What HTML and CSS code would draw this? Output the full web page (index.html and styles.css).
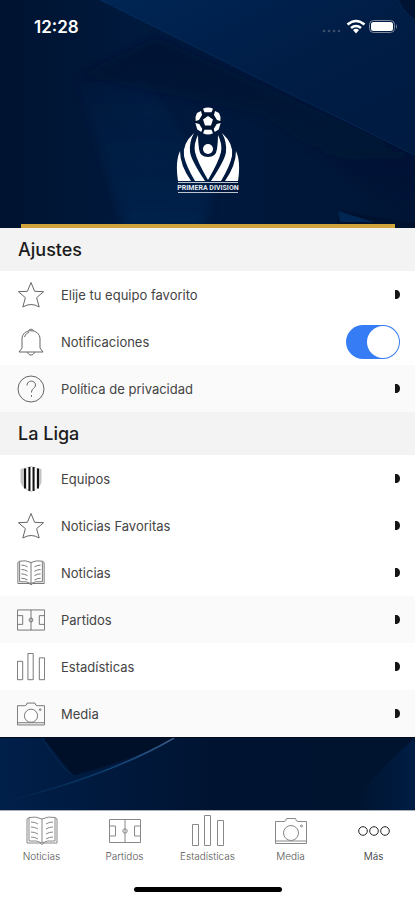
FILE: index.html
```html
<!DOCTYPE html>
<html lang="es">
<head>
<meta charset="utf-8">
<meta name="viewport" content="width=device-width, initial-scale=1">
<title>Ajustes</title>
<link rel="stylesheet" href="styles.css">
</head>
<body>
<svg class="sprite" aria-hidden="true">
  <symbol id="star" viewBox="0 0 28 28"><path d="M14 1.500l3.600 8.800 9 .4-7 6 2.600 9.300q-8-5-16.400 0l2.600-9.300-7-6 9-.4z"/></symbol>
  <symbol id="bell" viewBox="0 0 28 28"><path d="M11.500 3C12 .7 16 .7 16.500 3M5 20V11C5 0 23 0 23 11v9l3 4H2l3-4M7.500 9c1-3 2.500-4 4.500-4.500M10.500 24c1 4 6 4 7 0"/></symbol>
  <symbol id="help" viewBox="0 0 28 28"><circle cx="14" cy="14" r="13"/><path d="M10 10.500c0-6 8.500-5.500 8.500-.5 0 3.500-4 3-4 7.500M14.500 20v1.800"/></symbol>
  <symbol id="shield" viewBox="0 0 28 28"><path d="M3.500 4Q9 3 14 1q5 2 10.500 3v13q-1 6-10.500 10Q4.500 23 3.500 17z" fill="#c4c4c4" stroke="none"/><path d="M8 3.500v20M12.500 2v24M16.500 2v24M21 3.500v20" stroke="#111" stroke-width="2"/><path d="M10.300 3v21M14.500 2v24M18.700 3v21" stroke="#fff" stroke-width="1.500"/></symbol>
  <symbol id="book" viewBox="0 0 32 32"><path d="M16 4Q10 1 3 2.500L1 4v24h13q2 3 4 0h13V4l-2-1.500Q22 1 16 4v24M3 3v23q8-1 13 2 5-3 13-2V3M5 7q4 0 7 2M5 12q4 0 7 2M5 17q4 0 7 2M5 22q4 0 7 2M27 7q-4 0-7 2M27 12q-4 0-7 2M27 17q-4 0-7 2M27 22q-4 0-7 2"/></symbol>
  <symbol id="pitch" viewBox="0 0 32 32"><path d="M.5 4.500h31v23H.5zM16 4.500v23M.5 11h6v10h-6M31.500 11h-6v10h6"/><circle cx="16" cy="16" r="2.200"/></symbol>
  <symbol id="bars" viewBox="0 0 32 32"><path d="M.5 9.500h6v21h-6zM12.500.5h6v30h-6zM25.500 5.500h6v25h-6z"/></symbol>
  <symbol id="camera" viewBox="0 0 32 32"><path d="M.5 6.500h8.500q2 0 2.500-3h9q.5 3 2.500 3h8.500v22H.5zM.5 26h31"/><circle cx="16" cy="18" r="7.500" class="lens"/><circle cx="26.500" cy="11" r="1"/></symbol>
  <symbol id="more" viewBox="0 0 32 32"><circle cx="5" cy="16" r="4.300"/><circle cx="16" cy="16" r="4.300"/><circle cx="27" cy="16" r="4.300"/></symbol>
  <symbol id="arrow" viewBox="0 0 5 9"><path d="M0 0h2q3 1 3 4.500T2 9H0z" fill="#151515" stroke="none"/></symbol>
</svg>

<div class="app">
  <header class="hero">
    <svg class="backdrop" viewBox="0 0 415 229" preserveAspectRatio="none" aria-hidden="true">
      <defs>
        <linearGradient id="base"><stop offset="0" stop-color="#001330"/><stop offset=".35" stop-color="#001a3e"/><stop offset="1" stop-color="#001536"/></linearGradient>
        <linearGradient id="plane" x1="0" y1="0" x2="1" y2="1"><stop offset="0" stop-color="#002655"/><stop offset=".5" stop-color="#001d46"/><stop offset="1" stop-color="#001a40"/></linearGradient>
        <linearGradient id="fold" x1="0" y1="0" x2="0" y2="1"><stop offset="0" stop-color="#00112d"/><stop offset="1" stop-color="#00112d" stop-opacity="0"/></linearGradient>
        <linearGradient id="glow" x1="0" y1="0" x2="0" y2="1"><stop offset="0" stop-color="#002451" stop-opacity=".2"/><stop offset="1" stop-color="#002654"/></linearGradient>
        <filter id="soft"><feGaussianBlur stdDeviation="5"/></filter>
      </defs>
      <path fill="url(#base)" d="M0 0h415v229H0z"/>
      <path fill="url(#glow)" d="M78 82h70l67 104-12 43h-78z" opacity=".6" filter="url(#soft)"/>
      <path fill="url(#fold)" d="M80 75l76-37 259 118v60L260 115z" opacity=".6" filter="url(#soft)"/>
      <path fill="url(#plane)" d="M100 0h315v156z"/>
      <path fill="#000f29" d="M398 0h17v20q-12-8-17-20zM338 212l77 12v5h-77z" opacity=".7"/>
      <path fill="#002654" d="M338 212l36 11h-34z"/>
      <path fill="none" stroke="#0b3566" stroke-width=".5" d="M100 0l315 156M398 0q5 12 17 20"/>
    </svg>
    <div class="status">
      <time>12:28</time>
      <svg class="status-icons" viewBox="0 0 76 18" role="img" aria-label="Wi-Fi y batería">
        <g fill="#3d4e6b"><circle cx="3" cy="13" r="1.300"/><circle cx="8" cy="13" r="1.300"/><circle cx="13" cy="13" r="1.300"/><circle cx="18" cy="13" r="1.300"/></g>
        <g fill="none" stroke="#fff" stroke-width="2.600"><path d="M26.500 6.500q8.500-7 17 0M30 10q5-4 10 0"/></g>
        <path fill="#fff" d="M32 12q3-2.500 6 0l-3 3.500z"/>
        <rect x="48.500" y="2.500" width="25" height="12" rx="4" fill="none" stroke="#7c889b"/>
        <rect x="50" y="4" width="22" height="9" rx="2.500" fill="#fff"/>
        <path fill="#7c889b" d="M75 6q2 2.500 0 5z"/>
      </svg>
    </div>
    <svg class="crest" viewBox="0 0 64 88" role="img" aria-label="Primera División">
      <circle cx="32" cy="15" r="13.500" fill="#00132f"/>
      <g fill="#fff">
        <path d="M32 10l5 3.600-2 5.900h-6l-2-5.900zM27 2.800q5-2.500 10 0l-1.500 3.400h-7zM27 27.200q5 2.500 10 0l-1.500-3.400h-7zM19.500 11l1.500-4 4-2 1 4-3 5-3.300 1zM44.500 11L43 7l-4-2-1 4 3 5 3.300 1zM19.300 17l4 1 3 5-1 3-4-2.500zM44.700 17l-4 1-3 5 1 3 4-2.500z"/>
        <circle cx="32" cy="43" r="5"/>
        <path d="M22 29Q17.500 38 19 46q2 9 13 28 11-19 13-28 1.500-8-3-17 0 7-1 14-1 8-9 8t-9-8q-1-7-1-14z"/>
        <path d="M18 27Q6 38 8 50q2 10 11 25h10Q15 54 14 46q-1-10 4-19zM46 27q12 11 10 23-2 10-11 25H35q14-21 15-29 1-10-4-19z"/>
        <path d="M4 45Q-1 56 2 75h13Q4 59 4 45zM60 45q5 11 2 30H49q11-16 11-30z"/>
      </g>
      <path fill="none" stroke="#bcc4d0" d="M2 76.500h60M2 86.500h60"/>
      <text x="32" y="84" class="crest-name">PRIMERA DIVISION</text>
    </svg>
    <div class="gold"></div>
  </header>

  <main>
    <section>
      <h2>Ajustes</h2>
      <ul>
        <li><a class="row" href="#equipo"><svg class="icon"><use href="#star"/></svg><span>Elije tu equipo favorito</span><svg class="arrow"><use href="#arrow"/></svg></a></li>
        <li><label class="row" for="notif"><svg class="icon"><use href="#bell"/></svg><span>Notificaciones</span><input class="switch" id="notif" type="checkbox" role="switch" checked></label></li>
        <li class="shade"><a class="row" href="#privacidad"><svg class="icon"><use href="#help"/></svg><span>Política de privacidad</span><svg class="arrow"><use href="#arrow"/></svg></a></li>
      </ul>
    </section>
    <section>
      <h2>La Liga</h2>
      <ul>
        <li><a class="row" href="#equipos"><svg class="icon"><use href="#shield"/></svg><span>Equipos</span><svg class="arrow"><use href="#arrow"/></svg></a></li>
        <li><a class="row" href="#favoritas"><svg class="icon"><use href="#star"/></svg><span>Noticias Favoritas</span><svg class="arrow"><use href="#arrow"/></svg></a></li>
        <li><a class="row" href="#noticias"><svg class="icon"><use href="#book"/></svg><span>Noticias</span><svg class="arrow"><use href="#arrow"/></svg></a></li>
        <li class="shade"><a class="row" href="#partidos"><svg class="icon"><use href="#pitch"/></svg><span>Partidos</span><svg class="arrow"><use href="#arrow"/></svg></a></li>
        <li><a class="row" href="#estadisticas"><svg class="icon"><use href="#bars"/></svg><span>Estadísticas</span><svg class="arrow"><use href="#arrow"/></svg></a></li>
        <li class="shade"><a class="row" href="#media"><svg class="icon"><use href="#camera"/></svg><span>Media</span><svg class="arrow"><use href="#arrow"/></svg></a></li>
      </ul>
    </section>
  </main>

  <div class="lower">
    <svg class="backdrop" viewBox="0 0 415 73" preserveAspectRatio="none" aria-hidden="true">
      <defs>
        <linearGradient id="low"><stop offset="0" stop-color="#001f49"/><stop offset=".5" stop-color="#001432"/><stop offset="1" stop-color="#00142f"/></linearGradient>
        <linearGradient id="streak"><stop offset="0" stop-color="#07325f" stop-opacity="0"/><stop offset=".6" stop-color="#0b4173"/><stop offset="1" stop-color="#3a5c88"/></linearGradient>
        <linearGradient id="edge"><stop offset="0" stop-color="#001c42" stop-opacity="0"/><stop offset="1" stop-color="#001d45"/></linearGradient>
      </defs>
      <path fill="url(#low)" d="M0 0h415v73H0z"/>
      <path fill="#001029" d="M43 0h131q-45 24-101 38z"/>
      <path fill="url(#edge)" d="M415 0v73h-60q5-25 60-73z"/>
      <path fill="none" stroke="url(#streak)" stroke-width="1.500" d="M0 66q110-28 174-66"/>
      <path fill="none" stroke="#08305a" stroke-width=".7" d="M43 0q12 25 30 38"/>
    </svg>
  </div>

  <nav class="tabs">
    <a href="#noticias"><svg><use href="#book"/></svg>Noticias</a>
    <a href="#partidos"><svg><use href="#pitch"/></svg>Partidos</a>
    <a href="#estadisticas"><svg><use href="#bars"/></svg>Estadísticas</a>
    <a href="#media"><svg><use href="#camera"/></svg>Media</a>
    <a href="#mas" class="current" aria-current="page"><svg><use href="#more"/></svg>Más</a>
  </nav>
  <div class="home"></div>
</div>
</body>
</html>
```
FILE: styles.css
```css
* { box-sizing: border-box; }
body { margin: 0; background: #fff; color: #222; font-family: Inter, "Liberation Sans", sans-serif; }
.sprite { display: none; }
.app { min-height: 100vh; display: flex; flex-direction: column; }

.hero { position: relative; display: flex; flex-direction: column; background: #001737; }
.backdrop { position: absolute; inset: 0; width: 100%; height: 100%; }
.status { position: relative; display: flex; justify-content: space-between; align-items: center; padding: 16px 18px 0 34px; color: #fff; }
.status time { font-size: 17px; line-height: 22px; font-weight: 600; }
.status-icons { width: 76px; height: 18px; }
.crest { position: relative; align-self: center; width: 64px; height: 88px; margin: 68px 0 30px; }
.crest-name { fill: #e8ecf2; font-size: 7px; font-weight: 700; font-family: Roboto, sans-serif; text-anchor: middle; }
.gold { position: relative; height: 4px; margin: 0 20px 0 21px; background: #d2a43c; }

h2 { margin: 0; padding: 0 18px; background: #f3f3f3; color: #1b1b1b; font-size: 18px; line-height: 43px; font-weight: 500; }
ul { margin: 0; padding: 0; list-style: none; }
.shade { background: #fafafa; }
.row { display: flex; align-items: center; height: 47px; padding: 0 15px 0 17px; color: #444; font-size: 13px; font-weight: 400; line-height: 16px; text-decoration: none; }
.row span { flex: 1; margin-left: 16px; }
.icon { width: 28px; height: 28px; fill: none; stroke: #666; stroke-width: 1; }
.arrow { width: 5px; height: 9px; }
.switch { appearance: none; width: 54px; height: 34px; margin: 0; padding: 1px; border-radius: 17px; background: #367cf5; display: flex; justify-content: flex-end; }
.switch::before { content: ""; width: 32px; height: 32px; border-radius: 50%; background: #fff; }
.switch:not(:checked) { justify-content: flex-start; background: #ddd; }

.lower { position: relative; flex: 1; min-height: 40px; background: #001737; border-top: 1px solid #000b1c; }

.tabs { display: grid; grid-template-columns: repeat(5, 1fr); padding: 4px 0 24px; border-top: 1px solid #aaafb8; background: #fff; }
.tabs a { display: flex; flex-direction: column; align-items: center; gap: 2px; color: #555; font-size: 10px; line-height: 14px; font-weight: 300; text-decoration: none; }
.tabs svg { width: 32px; height: 32px; fill: none; stroke: #888; stroke-width: 1; }
.tabs .current { color: #222; }
.tabs .current svg { stroke: #222; }
.home { width: 148px; height: 5px; margin: 0 auto 8px; border-radius: 3px; background: #000; }
.lens { fill: #fff; }
```
